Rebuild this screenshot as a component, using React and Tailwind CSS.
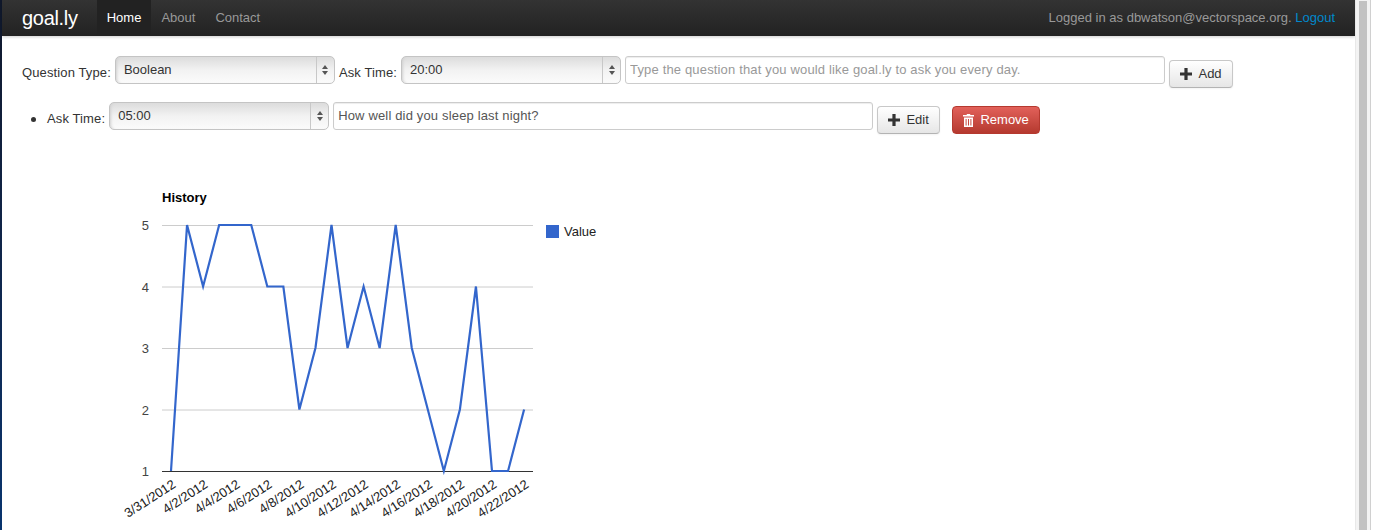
const values = [1, 5, 4, 5, 5, 5, 4, 4, 2, 3, 5, 3, 4, 3, 5, 3, 2, 1, 2, 4, 1, 1, 2]
const dates = ['3/31/2012', '4/2/2012', '4/4/2012', '4/6/2012', '4/8/2012', '4/10/2012', '4/12/2012', '4/14/2012', '4/16/2012', '4/18/2012', '4/20/2012', '4/22/2012']
const font = '"Liberation Sans", Arial, sans-serif'

// chart origin is the svg's top left, page offset (110,180)
const xAt = (i) => 61 + i * 16.05
const yAt = (v) => 291 - (v - 1) * 61.5

function PlusIcon() {
    return (
        <svg width="12" height="12" viewBox="0 0 12 12" className="shrink-0">
            <path d="M4.4 0h3.2v4.4H12v3.2H7.6V12H4.4V7.6H0V4.4h4.4z" fill="#333" />
        </svg>
    )
}

function TrashIcon() {
    return (
        <svg width="11" height="13" viewBox="0 0 11 13" className="shrink-0">
            <path
                fill="#fff"
                fillRule="evenodd"
                d="M4 0h3l.5 1H11v1.6H0V1h3.5zM1 3.4h9V13H1zM2.6 5v6.5h1V5zm2.4 0v6.5h1V5zm2.4 0v6.5h1V5z"
            />
        </svg>
    )
}

function FakeSelect({ value }) {
    return (
        <div className="flex h-[28px] w-[220px] rounded-[5px] border border-[#c4c4c4] bg-gradient-to-b from-[#dcdcdc] via-[#f2f2f2] to-[#fbfbfb] shadow-[inset_3px_0_3px_-2px_#d0d0d0]">
            <span className="flex-1 pl-2 pt-[4px] text-[13px] leading-[18px] text-[#333]">{value}</span>
            <span className="flex w-[18px] flex-col items-center justify-center gap-[2px] border-l border-[#c8c8c8]">
                <span className="h-0 w-0 border-x-[3px] border-b-[4px] border-x-transparent border-b-[#555]" />
                <span className="h-0 w-0 border-x-[3px] border-t-[4px] border-x-transparent border-t-[#555]" />
            </span>
        </div>
    )
}

function TextBox({ value, placeholder }) {
    return (
        <input
            readOnly
            value={value}
            placeholder={placeholder}
            className="h-[28px] w-[540px] rounded-[3px] border border-[#ccc] bg-white px-[4px] pb-[2px] text-[13px] tracking-[0.16px] text-[#555] shadow-[inset_0_1px_1px_rgba(0,0,0,0.075)] outline-none placeholder:text-[#999]"
        />
    )
}

function GrayButton({ children, width }) {
    return (
        <button className={`mt-[4px] flex h-[28px] ${width} items-center justify-center gap-[6px] rounded-[4px] border border-[#c8c8c8] border-b-[#b3b3b3] bg-gradient-to-b from-white to-[#e6e6e6] text-[13px] text-[#333] shadow-[inset_0_1px_0_rgba(255,255,255,0.2),0_1px_2px_rgba(0,0,0,0.05)]`}>
            <PlusIcon />
            {children}
        </button>
    )
}

function Label({ children }) {
    return <span className="pt-[8px] leading-[18px] tracking-[0.12px]">{children}</span>
}

function HistoryChart() {
    return (
        <svg width="520" height="352" className="ml-[88px] mt-[46px] block" style={{ fontFamily: font }}>
            <text x="52" y="22" fontSize="13" fontWeight="700" fill="#000">History</text>
            {[5, 4, 3, 2].map((v) => (
                <line key={v} x1="52" x2="423" y1={yAt(v) + 0.5} y2={yAt(v) + 0.5} stroke="#ccc" />
            ))}
            <line x1="52" x2="423" y1="291.5" y2="291.5" stroke="#333" />
            {[5, 4, 3, 2, 1].map((v) => (
                <text key={v} x="39" y={yAt(v) + 5} textAnchor="end" fontSize="13" fill="#444">{v}</text>
            ))}
            <polyline
                points={values.map((v, i) => `${xAt(i)},${yAt(v)}`).join(' ')}
                fill="none"
                stroke="#3366cc"
                strokeWidth="2.2"
            />
            {dates.map((d, i) => (
                <text
                    key={d}
                    textAnchor="end"
                    fontSize="13"
                    fill="#222"
                    transform={`translate(${xAt(i * 2) + 5.5} 306.5) rotate(-33)`}
                >
                    {d}
                </text>
            ))}
            <rect x="436" y="45" width="13" height="13" fill="#3366cc" />
            <text x="454" y="56" fontSize="13" fill="#222">Value</text>
        </svg>
    )
}

export default function App() {
    return (
        <div className="flex h-[530px] w-[1376px] overflow-hidden bg-white" style={{ fontFamily: font }}>
            <div className="w-[2px] bg-gradient-to-b from-[#10182c] to-[#08346e]" />

            <div className="w-[1353px]">
                <nav className="flex h-[36px] items-center bg-gradient-to-b from-[#333] to-[#222] pl-[20px] pr-[20px] text-[13px] text-[#999] shadow-[0_1px_3px_rgba(0,0,0,0.2)]">
                    <span className="mr-[19px] text-[20px] font-light tracking-[-0.3px] text-white">goal.ly</span>
                    <span className="flex h-full items-center bg-[#222] px-[10px] text-white">Home</span>
                    <span className="px-[10px]">About</span>
                    <span className="px-[10px]">Contact</span>
                    <span className="ml-auto">
                        Logged in as dbwatson@vectorspace.org. <span className="text-[#0088cc]">Logout</span>
                    </span>
                </nav>

                <div className="pl-[20px] pt-[20px] text-[13px] text-[#333]">
                    <div className="flex gap-[4px]">
                        <Label>Question Type:</Label>
                        <FakeSelect value="Boolean" />
                        <Label>Ask Time:</Label>
                        <FakeSelect value="20:00" />
                        <TextBox value="" placeholder="Type the question that you would like goal.ly to ask you every day." />
                        <GrayButton width="w-[64px]">Add</GrayButton>
                    </div>

                    <div className="mt-[14px] flex gap-[4px] pl-[9px]">
                        <span className="mr-[7px] mt-[15px] h-[5px] w-[5px] rounded-full bg-[#333]" />
                        <Label>Ask Time:</Label>
                        <FakeSelect value="05:00" />
                        <TextBox value="How well did you sleep last night?" />
                        <GrayButton width="w-[63px]">Edit</GrayButton>
                        <button className="ml-[8px] mt-[4px] flex h-[28px] w-[88px] items-center justify-center gap-[6px] rounded-[4px] border border-[#b5392f] bg-gradient-to-b from-[#e2615a] to-[#b5392f] text-[13px] text-white">
                            <TrashIcon />
                            Remove
                        </button>
                    </div>

                    <HistoryChart />
                </div>
            </div>

            <div className="flex w-[21px] border-l border-[#e8e8e8] bg-[#f3f3f3] pl-[3px]">
                <div className="mt-[1px] w-[8px] bg-[#c2c2c2]" />
                <div className="ml-[3px] w-[1px] bg-[#d0d0d0]" />
                <div className="flex-1 bg-white" />
            </div>
        </div>
    )
}
